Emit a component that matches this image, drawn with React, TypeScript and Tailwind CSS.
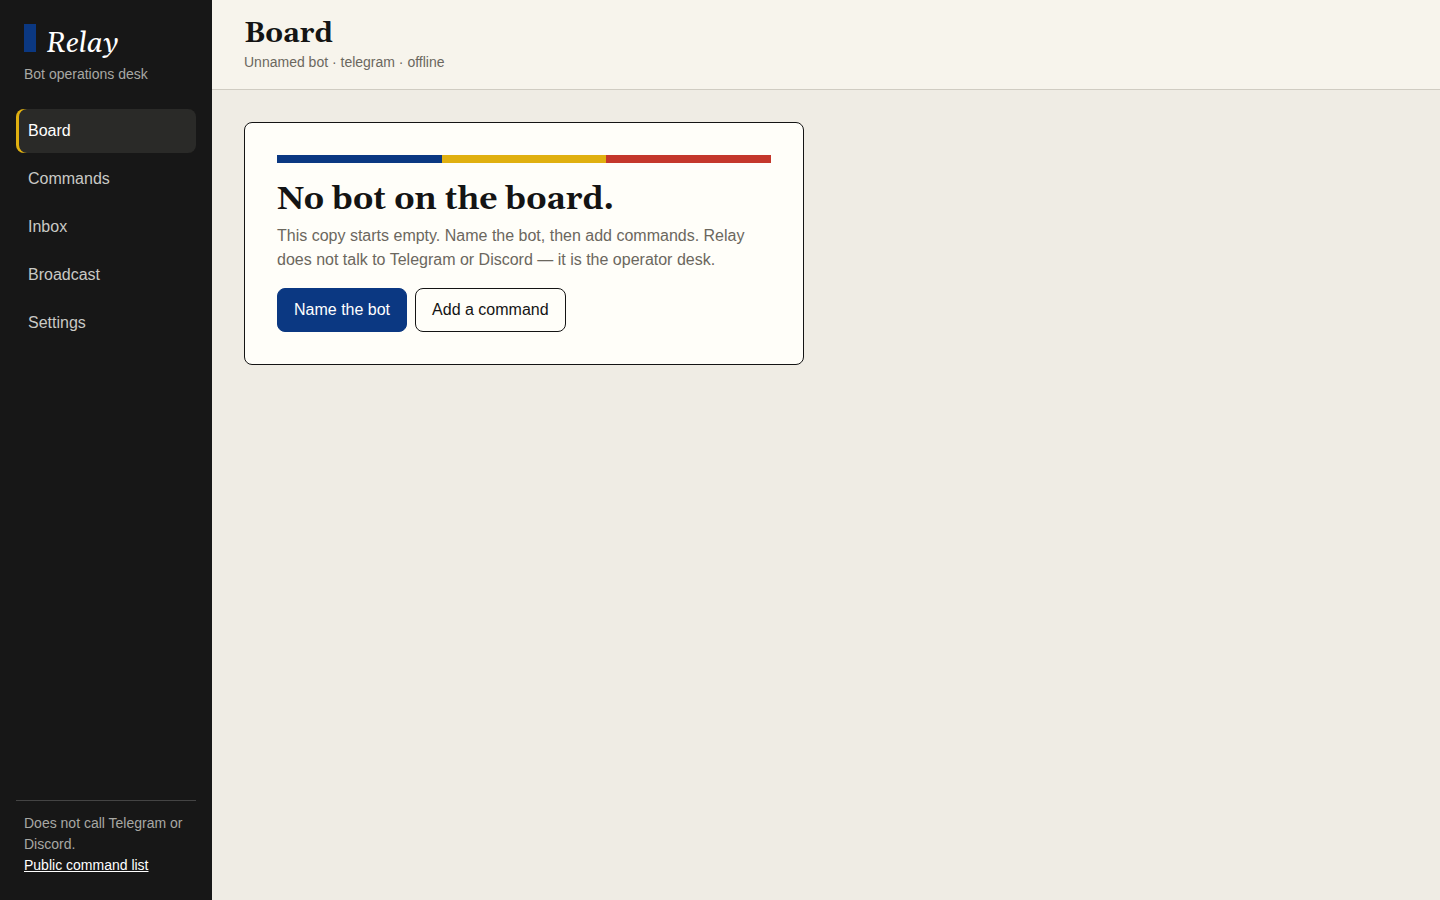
import clsx from "clsx";
import React, { useState } from "react";

const pages = ["Board", "Commands", "Inbox", "Broadcast", "Settings"];

type SidebarProps = {
  current: string;
  onSelect: (page: string) => void;
};

const Sidebar = ({ current, onSelect }: SidebarProps) => {
  return (
    <aside className="flex w-[212px] shrink-0 flex-col bg-[#171717] p-4">
      <div className="px-2 pt-2">
        <div className="flex items-baseline gap-2.5">
          <span className="h-7 w-3 bg-[#0b3882]" aria-hidden="true" />
          <span className="font-[Georgia,Gelasio,'Liberation_Serif',serif] text-[28px] leading-8 text-white italic">
            Relay
          </span>
        </div>
        <p className="mt-1 text-sm leading-[21px] text-[#a8a8a4]">
          Bot operations desk
        </p>
      </div>

      <nav className="mt-6 flex flex-col gap-1">
        {pages.map((page) => (
          <a
            key={page}
            href={`#${page.toLowerCase()}`}
            onClick={() => onSelect(page)}
            aria-current={page === current ? "page" : undefined}
            className={clsx(
              "flex h-11 items-center rounded-lg px-3",
              page === current
                ? "bg-[#2a2a28] text-white shadow-[inset_3px_0_0_#e0b010]"
                : "text-[#c9c9c5]",
            )}
          >
            {page}
          </a>
        ))}
      </nav>

      <div className="mt-auto border-t border-[#444444] px-2 pt-3 pb-2 text-sm leading-[21px] text-[#a8a8a4]">
        <p>Does not call Telegram or Discord.</p>
        <a href="#public" className="block text-white underline">
          Public command list
        </a>
      </div>
    </aside>
  );
};

const EmptyBoard = () => {
  return (
    <section className="max-w-[560px] rounded-lg border border-[#141414] bg-[#fffef9] p-8">
      <div className="grid h-2 grid-cols-3" aria-hidden="true">
        <span className="bg-[#0b3882]" />
        <span className="bg-[#e0b010]" />
        <span className="bg-[#c4372b]" />
      </div>
      <h2 className="mt-5 font-[Georgia,Gelasio,'Liberation_Serif',serif] text-[32px] leading-[33px] font-bold">
        No bot on the board.
      </h2>
      <p className="mt-2 leading-6 text-[#6b675e]">
        This copy starts empty. Name the bot, then add commands. Relay does not
        talk to Telegram or Discord — it is the operator desk.
      </p>
      <div className="mt-4 flex flex-wrap gap-2">
        <button
          type="button"
          className="h-11 rounded-lg border border-[#0b3882] bg-[#0b3882] px-4 text-white"
        >
          Name the bot
        </button>
        <button
          type="button"
          className="h-11 rounded-lg border border-[#141414] px-4"
        >
          Add a command
        </button>
      </div>
    </section>
  );
};

const App = () => {
  const [current, setCurrent] = useState<string>("Board");

  return (
    <div className="flex min-h-screen bg-[#efece4] font-['Liberation_Sans',Arial,sans-serif] text-base text-[#141414]">
      <Sidebar current={current} onSelect={setCurrent} />
      <div className="min-w-0 flex-1">
        <header className="border-b border-[#d0ccc2] bg-[#f7f4ec] px-8 pt-5 pb-4">
          <h1 className="font-[Georgia,Gelasio,'Liberation_Serif',serif] text-[28px] leading-7 font-bold">
            {current}
          </h1>
          <p className="mt-1 text-sm leading-[21px] text-[#6b675e]">
            Unnamed bot · telegram · offline
          </p>
        </header>
        <main className="p-8">
          <EmptyBoard />
        </main>
      </div>
    </div>
  );
};

export default App;
